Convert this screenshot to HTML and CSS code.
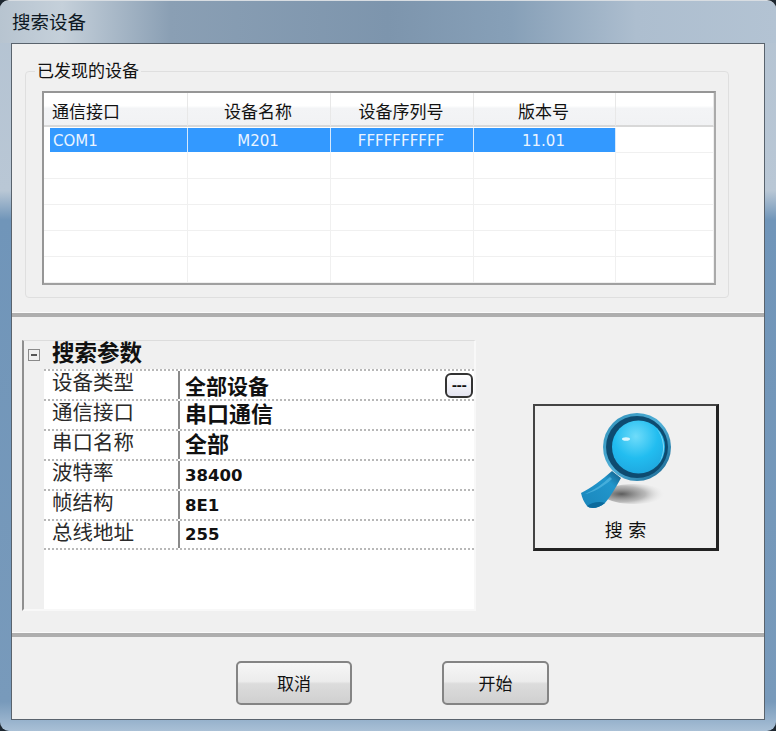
FILE: index.html
```html
<!DOCTYPE html>
<html lang="zh-CN">
<head>
    <meta charset="UTF-8">
    <title>搜索设备</title>
    <link rel="stylesheet" href="styles.css">
</head>
<body>
    <div class="window">
        <div class="title-bar">搜索设备</div>
        <div class="client">
            <div class="top-panel">
                <fieldset class="group">
                    <legend>已发现的设备</legend>
                    <div class="device-list">
                        <div class="head first">通信接口</div>
                        <div class="head">设备名称</div>
                        <div class="head">设备序列号</div>
                        <div class="head">版本号</div>
                        <div class="head"></div>

                        <div class="cell selected first">COM1</div>
                        <div class="cell selected">M201</div>
                        <div class="cell selected">FFFFFFFFFF</div>
                        <div class="cell selected">11.01</div>
                        <div class="cell"></div>

                        <div class="cell"></div><div class="cell"></div><div class="cell"></div><div class="cell"></div><div class="cell"></div>
                        <div class="cell"></div><div class="cell"></div><div class="cell"></div><div class="cell"></div><div class="cell"></div>
                        <div class="cell"></div><div class="cell"></div><div class="cell"></div><div class="cell"></div><div class="cell"></div>
                        <div class="cell"></div><div class="cell"></div><div class="cell"></div><div class="cell"></div><div class="cell"></div>
                        <div class="cell"></div><div class="cell"></div><div class="cell"></div><div class="cell"></div><div class="cell"></div>
                    </div>
                </fieldset>
            </div>

            <div class="splitter"></div>

            <div class="middle-panel">
                <div class="prop-grid">
                    <div class="prop-head">
                        <span class="collapse"></span>
                        <span class="prop-title">搜索参数</span>
                    </div>
                    <div class="prop-row">
                        <div class="prop-name">设备类型</div>
                        <div class="prop-value text-value">全部设备<span class="more-btn">---</span></div>
                    </div>
                    <div class="prop-row">
                        <div class="prop-name">通信接口</div>
                        <div class="prop-value text-value wide">串口通信</div>
                    </div>
                    <div class="prop-row">
                        <div class="prop-name">串口名称</div>
                        <div class="prop-value text-value wide">全部</div>
                    </div>
                    <div class="prop-row">
                        <div class="prop-name">波特率</div>
                        <div class="prop-value">38400</div>
                    </div>
                    <div class="prop-row">
                        <div class="prop-name">帧结构</div>
                        <div class="prop-value">8E1</div>
                    </div>
                    <div class="prop-row">
                        <div class="prop-name">总线地址</div>
                        <div class="prop-value">255</div>
                    </div>
                </div>

                <button class="search-btn" type="button">
                    <svg class="search-icon" width="96" height="98" viewBox="0 0 96 98">
                        <defs>
                            <radialGradient id="glass" cx="45%" cy="30%" r="75%">
                                <stop offset="0" stop-color="#6fdcfa"/>
                                <stop offset="0.55" stop-color="#22bdf0"/>
                                <stop offset="1" stop-color="#1ea6de"/>
                            </radialGradient>
                            <linearGradient id="rim" x1="0" y1="0" x2="1" y2="1">
                                <stop offset="0" stop-color="#2f8fb8"/>
                                <stop offset="0.5" stop-color="#4fb0d8"/>
                                <stop offset="1" stop-color="#135f8a"/>
                            </linearGradient>
                            <linearGradient id="handle" x1="1" y1="0" x2="0" y2="1">
                                <stop offset="0" stop-color="#11577f"/>
                                <stop offset="0.3" stop-color="#2196cc"/>
                                <stop offset="1" stop-color="#1a86bb"/>
                            </linearGradient>
                            <radialGradient id="shadow" cx="30%" cy="50%" r="70%">
                                <stop offset="0" stop-color="#5c5c5c"/>
                                <stop offset="0.55" stop-color="#a0a0a0" stop-opacity="0.7"/>
                                <stop offset="1" stop-color="#eee" stop-opacity="0"/>
                            </radialGradient>
                        </defs>
                        <ellipse cx="56" cy="83" rx="31" ry="10" fill="url(#shadow)"/>
                        <path d="M34 60 L43 67 C38 76 33 85 27 92 C20 98 12 98 9 95 C6 91 4 87 3 82 C13 77 24 69 34 60 Z" fill="url(#handle)"/>
                        <path d="M32 66 C25 73 16 79 7 83 C14 82 25 76 34 68 Z" fill="#55b9e2" opacity="0.7"/>
                        <path d="M9 95 C14 91 22 90 27 92 C20 98 12 98 9 95 Z" fill="#0c6a9c"/>
                        <circle cx="59" cy="36" r="34" fill="url(#rim)"/>
                        <circle cx="59" cy="36" r="31" fill="#0e4b70"/>
                        <circle cx="60.5" cy="36" r="26.5" fill="url(#glass)"/>
                        <path d="M78 17 A27 27 0 0 1 81 52 A31 31 0 0 0 78 17 Z" fill="#a9e6f8" opacity="0.7"/>
                        <ellipse cx="48" cy="28" rx="4" ry="1.8" fill="#d8f6ff"/>
                    </svg>
                    <span class="search-label">搜 索</span>
                </button>
            </div>

            <div class="splitter"></div>

            <div class="bottom-panel">
                <button class="btn cancel" type="button">取消</button>
                <button class="btn start" type="button">开始</button>
            </div>
        </div>
    </div>
</body>
</html>
```

FILE: styles.css
```css
* {
    box-sizing: border-box;
}
body {
    margin: 0;
    background: #1d2730;
    font-family: "DejaVu Sans", "Noto Sans CJK SC", sans-serif;
    color: #111;
}
.window {
    width: 776px;
    height: 731px;
    padding: 0 11px 11px;
    border-radius: 9px;
    border-top: 1px solid #d8dde2;
    background: linear-gradient(to bottom, #b4c3d2 0, #b9c7d5 26%, #7095b9 30%, #789abb 96%, #a9c0d6 100%);
    overflow: hidden;
}
.title-bar {
    height: 42px;
    margin: 0 -11px;
    padding: 11px 0 0 12px;
    font-size: 18.5px;
    line-height: 22px;
    color: #0c1722;
    background: linear-gradient(to right, #b7c4d0 0, #c5d0da 8%, #8a9fb4 22%, #7d95ad 50%, #87a0b8 66%, #adbecf 82%, #b3c3d3 100%);
}

/* client area */
.client {
    height: 677px;
    border: 1px solid #59636d;
    background: #f0f0f0;
    display: flex;
    flex-direction: column;
}
.top-panel {
    height: 268px;
    padding: 17px 0 0 13px;
}
.group {
    width: 704px;
    margin: 0;
    padding: 10px 12px 12px 16px;
    border: 1px solid #dfdfdf;
    border-radius: 4px;
}
.group legend {
    margin-left: -7px;
    padding: 0 2px;
    font-size: 17px;
    line-height: 20px;
}
.device-list {
    display: grid;
    grid-template-columns: 144px 143px 143px 142px 98px;
    grid-auto-rows: 26px;
    grid-template-rows: 34px;
    width: 674px;
    border: 2px solid #969696;
    border-right-color: #aaa;
    border-bottom-color: #a0a0a0;
    background: #fff;
    font-size: 15px;
}
.head {
    display: flex;
    align-items: center;
    justify-content: center;
    padding: 3px 2px 0 0;
    font-size: 17px;
    background: linear-gradient(to bottom, #fff 0, #fff 40%, #f3f4f6 48%, #f1f2f4 100%);
    border-right: 1px solid #e8e8e8;
    border-bottom: 2px solid #d8d8d8;
}
.head.first {
    justify-content: flex-start;
    padding-left: 8px;
}
.cell {
    display: flex;
    align-items: center;
    justify-content: center;
    border-right: 1px solid #f0f0f0;
    border-bottom: 1px solid #f0f0f0;
}
.cell.selected {
    color: #eaf4ff;
    background: #3399ff;
    border-right: 1px solid #d6e9fc;
    border-bottom: 1px solid #fff;
    margin-top: 1px;
    padding: 2px 2px 0 0;
}
.cell.first {
    justify-content: flex-start;
    margin-left: 6px;
    padding-left: 3px;
}

.splitter {
    height: 5px;
    flex: none;
    border-top: 1px solid #fafafa;
    background: #aeaeae;
}

/* search parameters */
.middle-panel {
    height: 315px;
    padding: 23px 0 0 10px;
    display: flex;
    align-items: flex-start;
}
.prop-grid {
    width: 454px;
    height: 271px;
    flex: none;
    border-left: 2px solid #8f8f8f;
    border-right: 2px solid #f8f8f8;
    border-bottom: 2px solid #f8f8f8;
    border-top: 1px solid #dcdcdc;
    background: linear-gradient(to right, #f0f0f0 20px, #fff 20px);
}
.prop-head {
    height: 28px;
    display: flex;
    align-items: center;
    background: #f0f0f0;
}
.collapse {
    width: 12px;
    height: 12px;
    margin-left: 4px;
    border: 1px solid #8a8a8a;
    background: linear-gradient(#555, #555) center / 6px 2px no-repeat, #efefef;
}
.prop-title {
    margin-left: 12px;
    padding-bottom: 4px;
    font-size: 22.5px;
    font-weight: 700;
    line-height: 28px;
}
.prop-row {
    display: flex;
    height: 30px;
    margin-left: 20px;
    border-top: 2px dotted #b8b8b8;
}
.prop-row:last-child {
    height: 31px;
    border-bottom: 2px dotted #b8b8b8;
}
.prop-name {
    width: 134px;
    padding-left: 8px;
    font-size: 20.5px;
    line-height: 24px;
    color: #2a2a2a;
}
.prop-value {
    flex: 1;
    display: flex;
    align-items: center;
    justify-content: space-between;
    padding: 0 1px 0 5px;
    border-left: 2px solid #8a8a8a;
    font-size: 16.5px;
    font-weight: 700;
}
.text-value {
    font-size: 21px;
}
.text-value.wide {
    font-size: 22px;
    padding-bottom: 6px;
}
.more-btn {
    display: flex;
    align-items: center;
    justify-content: center;
    width: 28px;
    height: 25px;
    border: 2px solid #333;
    border-radius: 6px;
    background: linear-gradient(to bottom, #fff, #e4e4f0);
    font-size: 13px;
    font-weight: 700;
    line-height: 1;
    letter-spacing: -0.5px;
}

.search-btn {
    display: flex;
    flex-direction: column;
    align-items: center;
    width: 186px;
    height: 147px;
    margin: 64px 0 0 57px;
    padding: 5px 0 0;
    border: 2px solid #444;
    border-right: 3px solid #222;
    border-bottom: 3px solid #222;
    background: #f0f0f0;
    font-family: inherit;
    color: #111;
}
.search-icon {
    flex: none;
}
.search-label {
    margin-top: 10px;
    font-size: 18px;
    line-height: 24px;
}

/* bottom buttons */
.bottom-panel {
    flex: 1;
    display: flex;
    align-items: flex-start;
    gap: 90px;
    padding: 24px 0 0 224px;
}
.btn {
    height: 44px;
    padding: 0 0 2px;
    border: 2px solid #848484;
    border-radius: 5px;
    background: linear-gradient(to bottom, #f6f6f6 0, #ececec 46%, #dcdcdc 52%, #d0d0d0 100%);
    font-family: inherit;
    font-size: 17px;
    color: #111;
}
.cancel {
    width: 116px;
}
.start {
    width: 107px;
}
```
